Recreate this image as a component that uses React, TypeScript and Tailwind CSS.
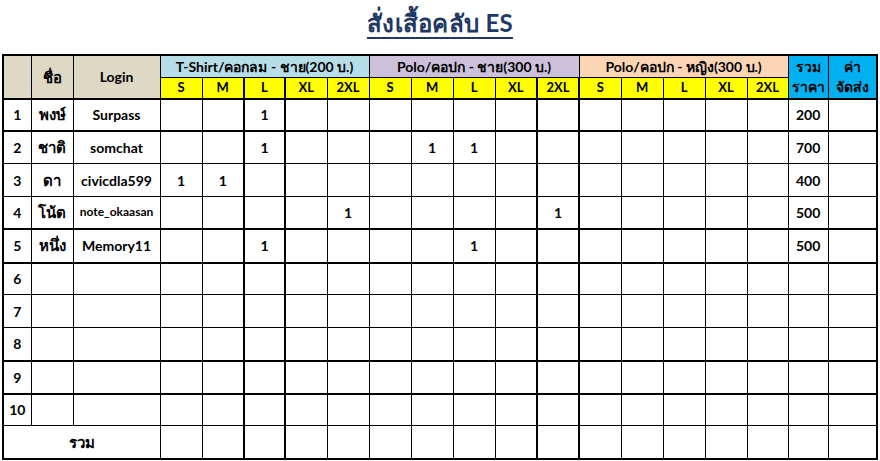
import React from 'react'

type Row = {
  no: number
  name: string
  login: string
  sizes: (number | null)[]
  total: string
  smallLogin?: boolean
}

const blank = () => Array(15).fill(null) as (number | null)[]

function sz(marks: Record<number, number>) {
  const arr = blank()
  Object.entries(marks).forEach(([k, v]) => (arr[Number(k)] = v))
  return arr
}

const rows: Row[] = [
  { no: 1, name: 'พงษ์', login: 'Surpass', sizes: sz({ 2: 1 }), total: '200' },
  { no: 2, name: 'ชาติ', login: 'somchat', sizes: sz({ 2: 1, 6: 1, 7: 1 }), total: '700' },
  { no: 3, name: 'ดา', login: 'civicdla599', sizes: sz({ 0: 1, 1: 1 }), total: '400' },
  { no: 4, name: 'โน้ต', login: 'note_okaasan', sizes: sz({ 4: 1, 9: 1 }), total: '500', smallLogin: true },
  { no: 5, name: 'หนึ่ง', login: 'Memory11', sizes: sz({ 2: 1, 7: 1 }), total: '500' },
  { no: 6, name: '', login: '', sizes: blank(), total: '' },
  { no: 7, name: '', login: '', sizes: blank(), total: '' },
  { no: 8, name: '', login: '', sizes: blank(), total: '' },
  { no: 9, name: '', login: '', sizes: blank(), total: '' },
  { no: 10, name: '', login: '', sizes: blank(), total: '' },
]

// rows whose bottom line is drawn heavy in the sheet
const thickBottom = [1, 4, 5, 8, 9]
const rowHeights = ['h-[32px]', 'h-[33px]', 'h-[33px]', 'h-[32px]', 'h-[34px]', 'h-[32px]', 'h-[33px]', 'h-[33px]', 'h-[33px]', 'h-[32px]']

const sizeLabels = ['S', 'M', 'L', 'XL', '2XL']
const sizeWidths = [
  'w-[42px]', 'w-[42px]', 'w-[41px]', 'w-[42px]', 'w-[42px]',
  'w-[42px]', 'w-[42px]', 'w-[42px]', 'w-[42px]', 'w-[42px]',
  'w-[42px]', 'w-[42px]', 'w-[42px]', 'w-[42px]', 'w-[41px]',
]

// columns framed with heavy side lines
const thickSide = (i: number) => (i === 2 || i === 9 ? 'border-x-2' : '')

export default function App() {
  return (
    <div className="w-[880px] h-[461px] bg-white text-black font-['Lato','Noto_Sans','DejaVu_Sans',sans-serif] overflow-hidden">
      <div className="h-[54px] flex justify-center pt-[8px]">
        <h1 className="text-[24px] font-bold underline decoration-2 underline-offset-[5px] text-[#1f3864] leading-[30px] tracking-[0.3px]">
          สั่งเสื้อคลับ ES
        </h1>
      </div>

      <table className="ml-[2px] w-[874px] table-fixed border-collapse border-2 border-black text-[13px] font-bold">
        <colgroup>
          <col className="w-[28px]" />
          <col className="w-[42px]" />
          <col className="w-[87px]" />
          {sizeWidths.map((w, i) => (
            <col key={i} className={w} />
          ))}
          <col className="w-[40px]" />
          <col className="w-[49px]" />
        </colgroup>
        <thead>
          <tr className="h-[22px]">
            <th rowSpan={2} className="border border-black border-b-2 bg-[#ddd9c4]"></th>
            <th rowSpan={2} className="border border-black border-b-2 bg-[#ddd9c4] text-[15px]">ชื่อ</th>
            <th rowSpan={2} className="border border-black border-b-2 bg-[#ddd9c4] text-[14px]">Login</th>
            <th colSpan={5} className="border border-black bg-[#b7dee8] text-[14px] whitespace-nowrap">T-Shirt/คอกลม - ชาย(200 บ.)</th>
            <th colSpan={5} className="border border-black bg-[#ccc0da] text-[14px] whitespace-nowrap">Polo/คอปก - ชาย(300 บ.)</th>
            <th colSpan={5} className="border border-black bg-[#fcd5b4] text-[14px] whitespace-nowrap">Polo/คอปก - หญิง(300 บ.)</th>
            <th rowSpan={2} className="border border-black border-b-2 bg-[#00b0f0] text-[14px] leading-[20px] font-bold">
              รวม
              <br />
              ราคา
            </th>
            <th rowSpan={2} className="border border-black border-b-2 bg-[#00b0f0] text-[14px] leading-[20px] font-bold">
              ค่า
              <br />
              จัดส่ง
            </th>
          </tr>
          <tr className="h-[21px]">
            {Array.from({ length: 15 }).map((_, i) => (
              <th key={i} className={`border border-black border-b-2 bg-[#ffff00] text-[13px] ${thickSide(i)}`}>
                {sizeLabels[i % 5]}
              </th>
            ))}
          </tr>
        </thead>
        <tbody>
          {rows.map((r, ri) => {
            const heavy = thickBottom.includes(r.no) ? 'border-b-2' : ''
            return (
              <tr key={r.no} className={rowHeights[ri]}>
                <td className={`border border-black text-center text-[14px] ${heavy}`}>{r.no}</td>
                <td className={`border border-black text-center text-[15px] ${heavy}`}>{r.name}</td>
                <td
                  className={`border border-black text-center ${r.smallLogin ? 'text-[12px]' : 'text-[14px]'} ${heavy}`}
                >
                  {r.login}
                </td>
                {r.sizes.map((v, i) => (
                  <td key={i} className={`border border-black text-center text-[14px] ${thickSide(i)} ${heavy}`}>
                    {v ?? ''}
                  </td>
                ))}
                <td className={`border border-black text-center text-[14px] ${heavy}`}>{r.total}</td>
                <td className={`border border-black ${heavy}`}></td>
              </tr>
            )
          })}
          <tr className="h-[33px]">
            <td colSpan={3} className="border border-black text-center text-[15px]">
              รวม
            </td>
            {Array.from({ length: 15 }).map((_, i) => (
              <td key={i} className={`border border-black ${thickSide(i)}`}></td>
            ))}
            <td className="border border-black"></td>
            <td className="border border-black"></td>
          </tr>
        </tbody>
      </table>
    </div>
  )
}
